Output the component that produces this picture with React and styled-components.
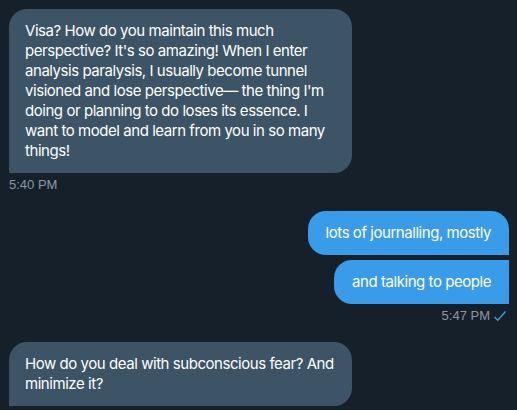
import styled, { createGlobalStyle } from 'styled-components'

const GlobalStyle = createGlobalStyle`
	html, body {
		margin: 0;
		background: #15202b;
	}
	body {
		font-family: Inter, "Noto Sans", sans-serif;
		-webkit-font-smoothing: antialiased;
	}
`

const messages = [
	{
		side: 'in',
		bubbles: [
			"Visa? How do you maintain this much perspective? It's so amazing! When I enter analysis paralysis, I usually become tunnel visioned and lose perspective\u2014 the thing I'm doing or planning to do loses its essence. I want to model and learn from you in so many things!",
		],
		time: '5:40 PM',
	},
	{
		side: 'out',
		bubbles: ['lots of journalling, mostly', 'and talking to people'],
		time: '5:47 PM',
		read: true,
	},
	{
		side: 'in',
		bubbles: [
			'How do you deal with subconscious fear? And minimize it?',
			'Like the kind that shows up before you even notice it',
		],
	},
]

export default function App () {
	return (
		<>
			<GlobalStyle />
			<Thread>
				{messages.map((group, i) => (
					<Group key={i} $side={group.side}>
						{group.bubbles.map((text, j) => (
							<Bubble
								key={j}
								$side={group.side}
								$first={j === 0}
							>
								{text}
							</Bubble>
						))}
						{group.time && (
							<Meta>
								{group.time}
								{group.read && (
									<svg width="14" height="12" viewBox="0 0 14 12">
										<path d="M1.5 7 L4.8 10.3 L12.5 1.5" fill="none" stroke="#3a9be8" strokeWidth="1.4" />
									</svg>
								)}
							</Meta>
						)}
					</Group>
				))}
			</Thread>
		</>
	)
}

const Thread = styled.main`
	display: flex;
	flex-direction: column;
	gap: 18px;
	padding: 9px 8px 0 9px;
	height: 410px;
	box-sizing: border-box;
	overflow: hidden;
`

const Group = styled.section`
	display: flex;
	flex-direction: column;
	gap: 5px;
	align-items: ${p => p.$side === 'out' ? 'flex-end' : 'flex-start'};
`

const Bubble = styled.div`
	max-width: 311px;
	padding: 12px ${p => p.$side === 'out' ? '18px' : '16px'};
	font-size: 15px;
	line-height: 20px;
	letter-spacing: -0.45px;
	color: #fff;
	background: ${p => p.$side === 'out' ? '#3a9be8' : '#3d5466'};
	border-radius: 18px;
	${p => p.$side === 'out'
		? `border-bottom-right-radius: 0; ${p.$first ? '' : 'border-top-right-radius: 0;'}`
		: `border-bottom-left-radius: 0; ${p.$first ? '' : 'border-top-left-radius: 0;'}`}
`

const Meta = styled.div`
	display: flex;
	align-items: center;
	gap: 3px;
	margin-top: -1px;
	height: 16px;
	font-family: "Liberation Sans", Arial, sans-serif;
	font-size: 13px;
	line-height: 16px;
	color: #8b98a5;
	padding-right: 2px;
`
